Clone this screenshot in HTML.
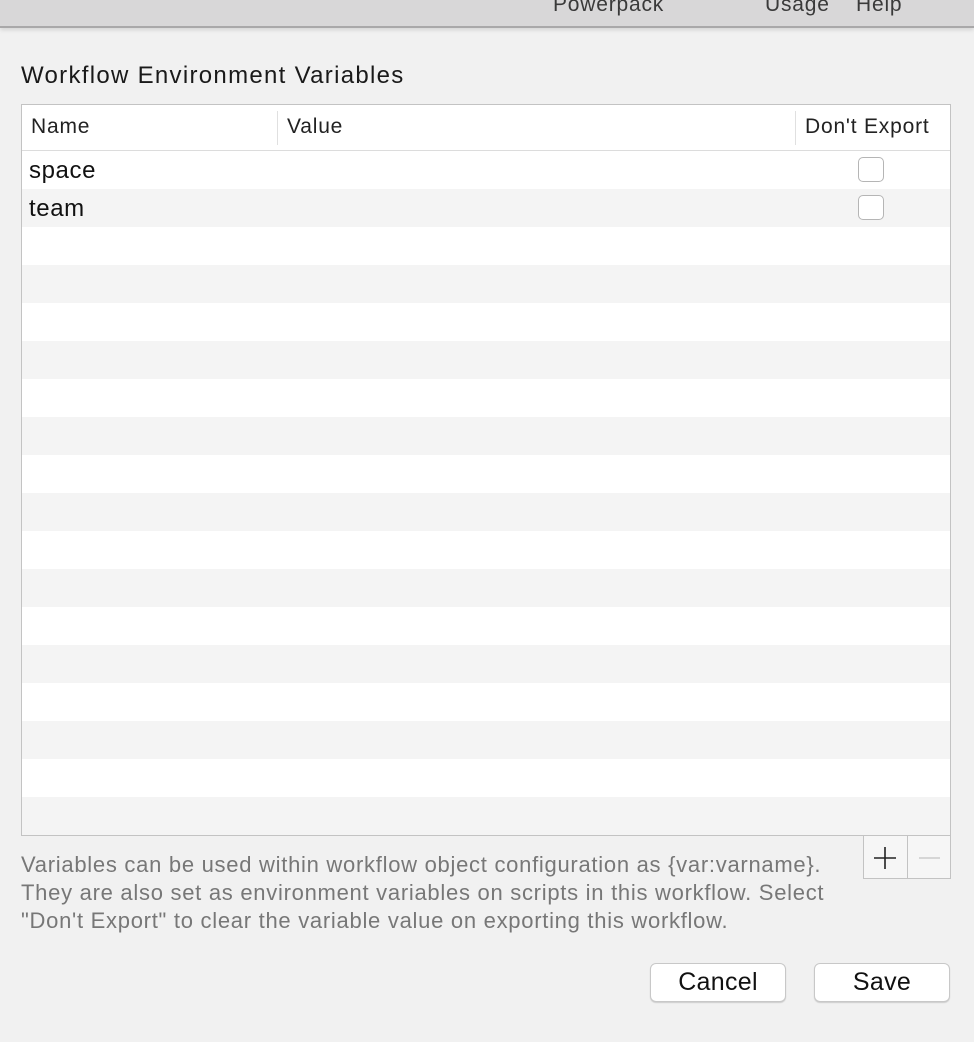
<!DOCTYPE html>
<html><head><style>
body{margin:0;width:974px;height:1042px;background:#f1f1f1;font-family:"Liberation Sans",sans-serif;position:relative;overflow:hidden}
.top{position:absolute;left:0;top:0;width:974px;height:26px;background:#d8d7d8;border-bottom:2px solid #a9a8a9;box-shadow:0 2px 4px rgba(0,0,0,.12)}
.top span{position:absolute;top:-7px;font-size:21px;letter-spacing:.8px;color:#3a3a3a}
.title{position:absolute;left:21px;top:62px;font-size:24px;letter-spacing:1.3px;color:#1a1a1a}
.tbl{position:absolute;left:21px;top:104px;width:928px;height:730px;border:1px solid #c3c3c3;background:#fff;overflow:hidden}
.hdr{height:45px;border-bottom:1px solid #dcdcdc;position:relative;background:#fff}
.hdr span{position:absolute;top:10px;font-size:21px;letter-spacing:.8px;color:#222}
.sep{position:absolute;top:6px;width:1px;height:34px;background:#e0e0e0}
.row{height:38px;position:relative}
.row span{position:absolute;left:7px;top:6px;font-size:24px;letter-spacing:.6px;color:#111}
.cb{position:absolute;left:836px;top:6px;width:26px;height:25px;border:1px solid #b5b5b5;border-radius:5px;background:#fff;box-sizing:border-box}
.pm{position:absolute;top:835px;height:44px;box-sizing:border-box;background:#f6f6f6;border:1px solid #c3c3c3}
.help{position:absolute;left:21px;top:851px;font-size:22px;letter-spacing:.72px;line-height:28px;color:#777;white-space:nowrap}
.btn{position:absolute;top:963px;width:136px;height:39px;box-sizing:border-box;background:#fff;border:1px solid #c8c8c8;border-radius:6px;box-shadow:0 1px 1px rgba(0,0,0,.15);font-size:25px;letter-spacing:.3px;text-align:center;line-height:37px;color:#111}
</style></head><body>
<div class="top"><span style="left:553px">Powerpack</span><span style="left:765px">Usage</span><span style="left:856px">Help</span></div>
<div class="title">Workflow Environment Variables</div>
<div class="tbl">
<div class="hdr"><span style="left:9px">Name</span><div class="sep" style="left:255px"></div><span style="left:265px">Value</span><div class="sep" style="left:773px"></div><span style="left:783px">Don't Export</span></div>
<div>
<div class="row" style="background:#fff"><span>space</span><div class="cb"></div></div>
<div class="row" style="background:#f4f4f4"><span>team</span><div class="cb"></div></div>
<div class="row" style="background:#fff"></div><div class="row" style="background:#f4f4f4"></div>
<div class="row" style="background:#fff"></div><div class="row" style="background:#f4f4f4"></div>
<div class="row" style="background:#fff"></div><div class="row" style="background:#f4f4f4"></div>
<div class="row" style="background:#fff"></div><div class="row" style="background:#f4f4f4"></div>
<div class="row" style="background:#fff"></div><div class="row" style="background:#f4f4f4"></div>
<div class="row" style="background:#fff"></div><div class="row" style="background:#f4f4f4"></div>
<div class="row" style="background:#fff"></div><div class="row" style="background:#f4f4f4"></div>
<div class="row" style="background:#fff"></div><div class="row" style="background:#f4f4f4"></div>
<div class="row" style="background:#fff"></div><div class="row" style="background:#f4f4f4"></div>
</div></div>
<div class="pm" style="left:863px;width:45px"><svg width="44" height="44" style="position:absolute;left:0;top:0"><path d="M21 11V33M10 22H32" stroke="#222" stroke-width="1.6"/></svg></div>
<div class="pm" style="left:907px;width:44px"><svg width="44" height="44" style="position:absolute;left:0;top:0"><path d="M11 22H32" stroke="#ccc" stroke-width="1.6"/></svg></div>
<div class="help">Variables can be used within workflow object configuration as {var:varname}.<br>They are also set as environment variables on scripts in this workflow. Select<br>"Don't Export" to clear the variable value on exporting this workflow.</div>
<div class="btn" style="left:650px">Cancel</div>
<div class="btn" style="left:814px">Save</div>
</body></html>
